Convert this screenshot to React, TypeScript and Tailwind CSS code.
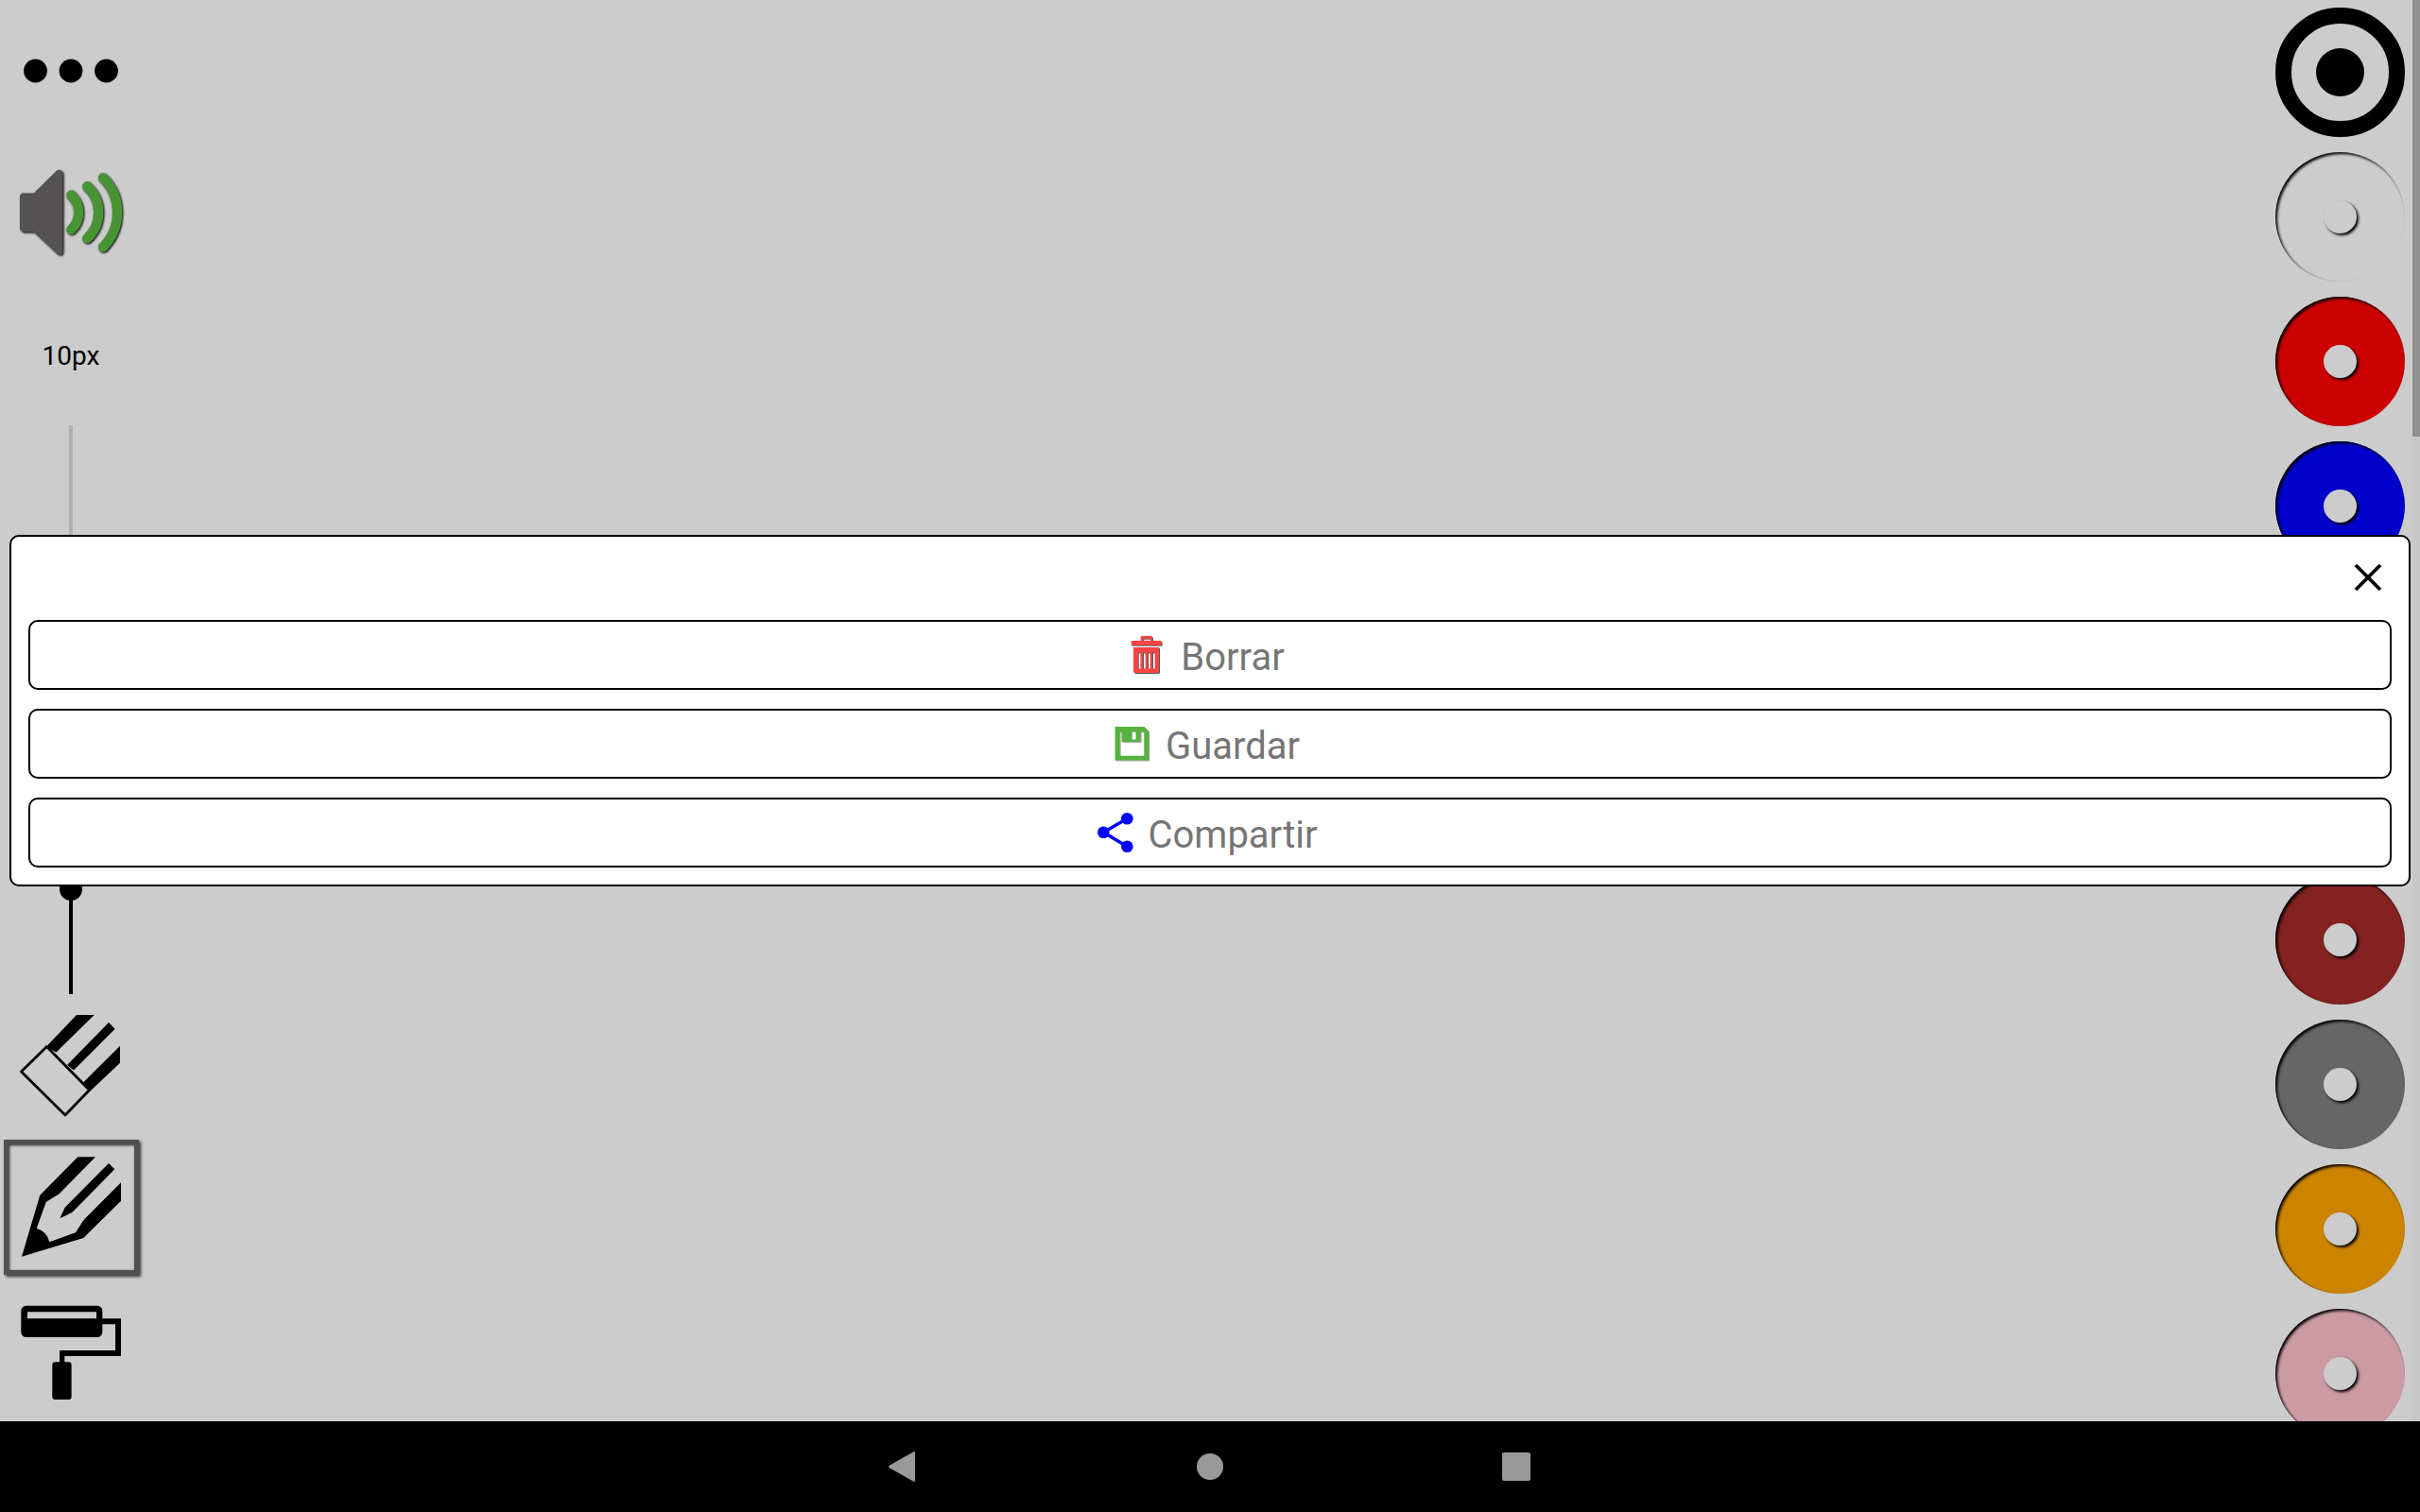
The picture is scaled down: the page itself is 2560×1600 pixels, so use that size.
import React, { useState } from 'react';

const COLORS = [
  { name: 'Blanco', className: 'bg-[#cccccc]' },
  { name: 'Rojo', className: 'bg-[#cc0000]' },
  { name: 'Azul', className: 'bg-[#0000cc]' },
  { name: 'Verde', className: 'bg-[#00cc00]' },
  { name: 'Amarillo', className: 'bg-[#cccc00]' },
  { name: 'Marrón', className: 'bg-[#842121]' },
  { name: 'Gris', className: 'bg-[#666666]' },
  { name: 'Naranja', className: 'bg-[#cc8400]' },
  { name: 'Rosa', className: 'bg-[#cc9aa3]' },
];

const MIN_SIZE = 1;
const MAX_SIZE = 50;

const DotsIcon = () => (
  <svg viewBox="0 0 150 150" className="size-full">
    <circle cx="37.5" cy="75" r="12.4" />
    <circle cx="75" cy="75" r="12.4" />
    <circle cx="112.5" cy="75" r="12.4" />
  </svg>
);

const SpeakerIcon = () => (
  <svg viewBox="0 0 150 150" className="size-full drop-shadow-[1px_1px_1px_#000]">
    <path
      fill="#555253"
      d="M23 54.500H35.700L59.500 31Q62 28.800 64.500 30.300Q66.500 31.300 66.500 33.300V117Q66.500 119.500 64 119.800Q62 120 60 118L36 95.500H24L21 92.500V57Z"
    />
    <g fill="none" stroke="#489435" strokeWidth="10.400" strokeLinecap="round">
      <path d="M75.300 56.500A25 25 0 0 1 75.300 93" />
      <path d="M92.200 47.300A37.500 37.500 0 0 1 92.200 102.300" />
      <path d="M109 38.200A52 52 0 0 1 109 111.500" />
    </g>
  </svg>
);

const EraserIcon = () => (
  <svg viewBox="0 0 150 150" className="size-full">
    <path fill="none" stroke="#000" strokeWidth="2.800" strokeLinejoin="round" d="M22.500 82L49.500 55.500L94.500 101.500L69 128Z" />
    <path d="M81 22H99.700L59.500 61.500L49 55.500Z" />
    <path d="M115 30L121.700 36.700L78 80.500L71 75Z" />
    <path d="M127 54.700V72.700L95 103L88.500 93Z" />
  </svg>
);

const PencilIcon = () => (
  <svg viewBox="4 4 143 143" className="absolute inset-0 size-full">
    <path d="M82.300 22.300H101L62.700 61.300L48.700 70L38.700 98A19 19 0 0 1 52.300 112.300L80 102.300L88.700 88.700L128 49.300V68.700L88.300 108L23 127.700L42.300 62.700Z" />
    <path d="M115 29L121.300 35.300L76.300 81L63.300 87.300L68.700 75.700Z" />
  </svg>
);

const RollerIcon = () => (
  <svg viewBox="0 0 150 150" className="size-full">
    <path
      fillRule="evenodd"
      d="M27.800 29.700H102.800A5.500 5.500 0 0 1 108.300 35.200V57.500A5.500 5.500 0 0 1 102.800 63H27.800A5.500 5.500 0 0 1 22.300 57.500V35.200A5.500 5.500 0 0 1 27.800 29.700ZM29 36.300V43.300H102V36.300Z"
    />
    <path d="M108 43.300H128V83H68.300V90H63V77H122V49.300H108Z" />
    <rect x="55.300" y="89.300" width="20.300" height="39.700" rx="3" />
  </svg>
);

const TrashIcon = () => (
  <svg viewBox="1 0 48 48" className="size-12 drop-shadow-[1px_1px_0px_#555]">
    <g fill="#ff4444">
      <path fillRule="evenodd" d="M17.500 4H28L29 5V9H38L38.500 9.700V13.700H6.700V9H16.700V5ZM19.300 6.700V9H27V6.700Z" />
      <path
        fillRule="evenodd"
        d="M9 16H36V42L35 43H10L9 42ZM13.700 21.500V38.500H16.400V21.500ZM19 21.500V38.500H21.700V21.500ZM24 21.500V38.500H26.700V21.500ZM29 21.500V38.500H31.700V21.500Z"
      />
    </g>
  </svg>
);

const SaveIcon = () => (
  <svg viewBox="1 0 48 48" className="size-12 drop-shadow-[1px_1px_0px_#aaa]">
    <path
      fill="#56b13f"
      fillRule="evenodd"
      d="M5.500 6H36.500L41.300 11V41.500H5.500ZM10.700 11.500V36.800H36.300V11.500H32.700V22H12.500V11.500ZM23 11V19.500H27.500V11Z"
    />
  </svg>
);

const ShareIcon = () => (
  <svg viewBox="0 0 48 48" className="size-12" fill="#0000ff">
    <path fill="none" stroke="#0000ff" strokeWidth="3.500" d="M36.300 9.300L11.300 23.700L36.300 38.700" />
    <circle cx="11.300" cy="23.700" r="6.300" />
    <circle cx="36.300" cy="9.300" r="6.300" />
    <circle cx="36.300" cy="38.700" r="6.300" />
  </svg>
);

const ACTIONS = [
  { label: 'Borrar', Icon: TrashIcon },
  { label: 'Guardar', Icon: SaveIcon },
  { label: 'Compartir', Icon: ShareIcon },
];

const ToolButton: React.FC<{ label: string; onClick?: () => void; children: React.ReactNode }> = ({ label, onClick, children }) => (
  <button type="button" aria-label={label} onClick={onClick} className="size-[150px] shrink-0">
    {children}
  </button>
);

const SizeSlider: React.FC<{ value: number; onChange: (value: number) => void }> = ({ value, onChange }) => {
  const filled = ((value - MIN_SIZE) / (MAX_SIZE - MIN_SIZE)) * 100;

  return (
    <div className="relative flex w-1 min-h-0 flex-1 flex-col justify-end bg-[#b0b0b0]">
      <div className="bg-black" style={{ height: `${filled}%` }} />
      {/* The thumb's centre travels the whole track, so the input sticks out by half a thumb */}
      <input
        id="brush-size"
        type="range"
        min={MIN_SIZE}
        max={MAX_SIZE}
        value={value}
        onChange={(e) => onChange(Number(e.target.value))}
        className="absolute -top-3 -left-2.5 h-[calc(100%+24px)] w-6 appearance-none bg-transparent [direction:rtl] [writing-mode:vertical-lr] [&::-webkit-slider-thumb]:size-6 [&::-webkit-slider-thumb]:appearance-none [&::-webkit-slider-thumb]:rounded-full [&::-webkit-slider-thumb]:bg-black"
      />
    </div>
  );
};

const App: React.FC = () => {
  const [size, setSize] = useState(10);
  const [menuOpen, setMenuOpen] = useState(true);

  return (
    <div className="flex h-screen flex-col overflow-hidden bg-black font-['Roboto',sans-serif]">
      <main className="relative flex min-h-0 flex-1 justify-between bg-[#cccccc]">
        <div className="flex w-[150px] flex-col items-center pb-0.5">
          <ToolButton label="Menú" onClick={() => setMenuOpen(true)}>
            <DotsIcon />
          </ToolButton>
          <ToolButton label="Sonido">
            <SpeakerIcon />
          </ToolButton>
          <label htmlFor="brush-size" className="flex h-[150px] shrink-0 items-center pt-1 text-[28px] text-black">
            {size}px
          </label>
          <SizeSlider value={size} onChange={setSize} />
          <ToolButton label="Goma">
            <EraserIcon />
          </ToolButton>
          <div className="size-[150px] shrink-0 pt-1 pr-[3px] pb-[3px] pl-1">
            <button
              type="button"
              aria-label="Lápiz"
              aria-pressed="true"
              className="relative size-full shadow-[2px_2px_3px_#333]"
            >
              <span className="absolute inset-0 border-[5px] border-[#505050] bg-[#cccccc] shadow-[inset_1px_1px_3px_#222]" />
              <PencilIcon />
            </button>
          </div>
          <ToolButton label="Rodillo">
            <RollerIcon />
          </ToolButton>
        </div>

        <div className="flex overflow-hidden">
          <div className="flex flex-col gap-4 p-2">
            <button
              type="button"
              aria-label="Negro"
              className="flex size-[137px] shrink-0 items-center justify-center rounded-full border-[17px] border-black"
            >
              <span className="size-[51px] rounded-full bg-black" />
            </button>
            {COLORS.map((color) => (
              <button
                key={color.name}
                type="button"
                aria-label={color.name}
                className={`flex size-[137px] shrink-0 items-center justify-center rounded-full shadow-[inset_2px_2px_3px_#000] ${color.className}`}
              >
                <span className="size-[35px] rounded-full bg-[#cccccc] shadow-[2px_2px_3px_#000]" />
              </button>
            ))}
          </div>
          {/* Scroll indicator of the palette */}
          <div className="w-2 bg-[#c8c8c8]">
            <div className="h-[462px] bg-[#909090]" />
          </div>
        </div>

        {menuOpen && (
          <div className="absolute inset-0 flex items-center px-2.5">
            <div role="dialog" aria-label="Menú" className="w-full rounded-[10px] border-2 border-black bg-white px-[18px] pb-[18px]">
              <div className="-mr-[18px] flex justify-end">
                <button type="button" aria-label="Cerrar" onClick={() => setMenuOpen(false)} className="size-[88px]">
                  <svg viewBox="0 0 88 88" className="size-full" fill="none" stroke="#000" strokeWidth="3.800">
                    <path d="M32 30L58 56M58 30L32 56" />
                  </svg>
                </button>
              </div>
              <div className="flex flex-col gap-5">
                {ACTIONS.map(({ label, Icon }) => (
                  <button
                    key={label}
                    type="button"
                    className="flex h-[74px] w-full items-center justify-center rounded-[10px] border-2 border-black"
                  >
                    <Icon />
                    <span className="px-2.5 pt-1.5 text-[40px] leading-[48px] text-[#757575]">{label}</span>
                  </button>
                ))}
              </div>
            </div>
          </div>
        )}
      </main>

      <nav className="flex h-24 shrink-0 justify-center">
        <button type="button" aria-label="Atrás" className="flex w-[324px] items-center justify-center">
          <svg viewBox="0 0 32 32" className="size-8" fill="#999999">
            <path d="M26.500 0.300Q28 -0.400 28 1.300V30.700Q28 32.400 26.500 31.700L0.800 17.200Q-0.700 16 0.800 14.800Z" />
          </svg>
        </button>
        <button type="button" aria-label="Inicio" className="flex w-[324px] items-center justify-center">
          <span className="size-7 rounded-full bg-[#999999]" />
        </button>
        <button type="button" aria-label="Recientes" className="flex w-[324px] items-center justify-center">
          <span className="size-[30px] rounded-xs bg-[#999999]" />
        </button>
      </nav>
    </div>
  );
};

export default App;
